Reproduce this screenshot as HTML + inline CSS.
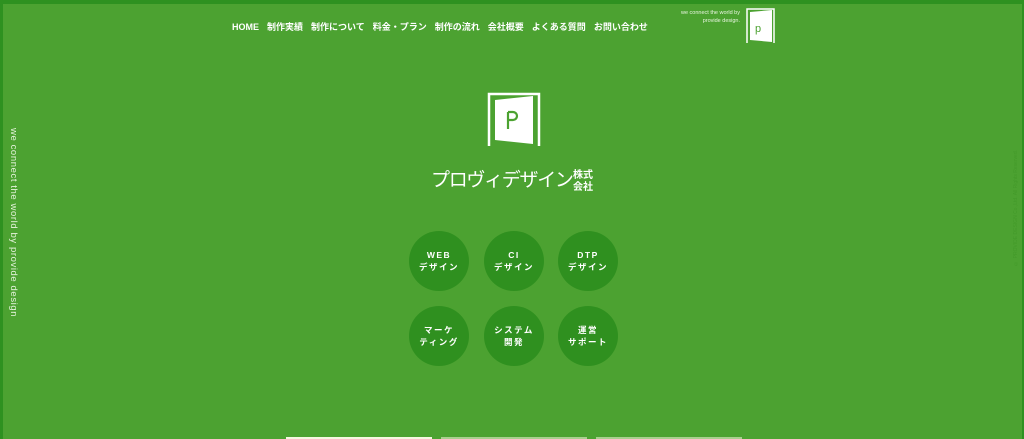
<!DOCTYPE html>
<html><head><meta charset="utf-8"><style>
*{margin:0;padding:0;box-sizing:border-box}
body{width:1024px;height:439px;overflow:hidden;background:#4ca231;font-family:"Liberation Sans","Noto Sans CJK JP",sans-serif;color:#fff;position:relative}
.frame{position:absolute;inset:0;border-top:4px solid #2e9120;border-left:3px solid #2e9120;border-right:2px solid #2e9120;border-bottom:0}
nav{position:absolute;top:20px;left:232px;font-size:9px;font-weight:bold;white-space:nowrap}
nav span{margin-right:8px}
.tag{position:absolute;top:9px;left:640px;width:100px;text-align:right;font-size:5.5px;line-height:8px;color:#e8f5e0}
.side{position:absolute;left:8px;top:128px;writing-mode:vertical-rl;font-size:9.5px;letter-spacing:0.6px;color:#e6f3dd}
.copy{position:absolute;left:1013px;top:150px;writing-mode:vertical-rl;transform:rotate(180deg);font-size:5px;color:#439a2a}
.c{position:absolute;width:60px;height:60px;border-radius:50%;background:#2f901f;font-size:8.5px;font-weight:bold;text-align:center;line-height:12px;letter-spacing:1.5px;display:flex;align-items:center;justify-content:center}
.b{position:absolute;top:437px;height:2px;width:146px;background:#a9d08f}
.name{position:absolute;left:431px;top:165px;font-size:19px;letter-spacing:-1.3px;white-space:nowrap}
.kk{position:absolute;left:573px;top:170px;font-size:10px;line-height:12px;width:24px;font-weight:bold}
</style></head><body>
<div class="frame"></div>
<nav><span>HOME</span><span>制作実績</span><span>制作について</span><span>料金・プラン</span><span>制作の流れ</span><span>会社概要</span><span>よくある質問</span><span>お問い合わせ</span></nav>
<div class="tag">we connect the world by<br>provide design.</div>
<svg style="position:absolute;left:746px;top:8px" width="30" height="36" viewBox="0 0 30 36"><path d="M1 35V1h27v34" fill="none" stroke="#fff" stroke-width="1.5"/><path d="M4 4l22-2v32l-22-2z" fill="#fff"/><text x="9" y="24" font-size="11" fill="#4ca231" font-family="Liberation Sans">p</text></svg>
<div class="side">we connect the world by provide design</div>
<div class="copy">© PROVIDE DESIGN Co.,Ltd. All Rights Reserved.</div>
<svg style="position:absolute;left:487px;top:92px" width="54" height="55" viewBox="0 0 54 55"><path d="M2 54V2h50v52" fill="none" stroke="#fff" stroke-width="2.5"/><path d="M8 8l38-4v48l-38-4z" fill="#fff"/><path d="M21 20v17M21 20h5a4 4 0 010 8h-5" fill="none" stroke="#4ca231" stroke-width="2.2"/></svg>
<div class="name">プロヴィデザイン</div>
<div class="kk">株式<br>会社</div>
<div class="c" style="left:409px;top:231px">WEB<br>デザイン</div>
<div class="c" style="left:484px;top:231px">CI<br>デザイン</div>
<div class="c" style="left:558px;top:231px">DTP<br>デザイン</div>
<div class="c" style="left:409px;top:306px">マーケ<br>ティング</div>
<div class="c" style="left:484px;top:306px">システム<br>開発</div>
<div class="c" style="left:558px;top:306px">運営<br>サポート</div>
<div class="b" style="left:286px;background:#f4f8e0"></div>
<div class="b" style="left:441px"></div>
<div class="b" style="left:596px"></div>
</body></html>
